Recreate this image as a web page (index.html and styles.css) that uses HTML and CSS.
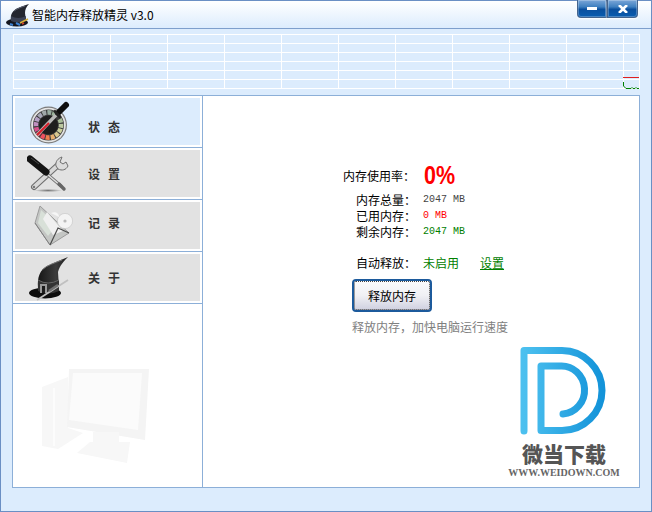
FILE: index.html
```html
<!DOCTYPE html>
<html lang="zh-CN">
<head>
  <meta charset="UTF-8" />
  <title>智能内存释放精灵 v3.0</title>
  <link rel="stylesheet" href="styles.css">
</head>
<body>
  <div class="window">
    <div class="titlebar">
      <svg class="title-icon" width="26" height="26" viewBox="0 0 26 26">
        <path d="M6 19C5 12 8 8 13 6C17 4 21 3 24 2C21 5 20 8 20 11L21 19Z" fill="#23262f"/>
        <path d="M9 9C12 7 16 5 20 4" stroke="#5a5f70" fill="none"/>
        <ellipse cx="12" cy="20.5" rx="11" ry="4" fill="#14161f"/>
        <path d="M6 14Q13 18 21 14V19Q13 22 6 19Z" fill="#3a4154"/>
        <path d="M5 22L8 23M11 21L15 23" stroke="#3b7fd0" stroke-width="2"/>
        <path d="M15 21L23 17" stroke="#d9b13b" stroke-width="1.4"/>
        <path d="M17 22L19 21" stroke="#d8432f" stroke-width="1.4"/>
      </svg>
      <span class="title-text">智能内存释放精灵 v3.0</span>
      <div class="win-buttons">
        <div class="win-btn"><span class="min-bar"></span></div>
        <div class="win-btn win-close">
          <svg width="10" height="8" viewBox="0 0 10 8"><path d="M1 0L9 8M9 0L1 8" stroke="#fff" stroke-width="2.6"/></svg>
        </div>
      </div>
    </div>

    <!-- memory history chart -->
    <svg class="chart" width="628" height="56" viewBox="0 0 628 56">
      <path d="M0.5 0V55M40.5 0V55M97.5 0V55M154.5 0V55M211.5 0V55M268.5 0V55M325.5 0V55M382.5 0V55M439.5 0V55M496.5 0V55M553.5 0V55M610.5 0V55M626.5 0V55" stroke="#fff" fill="none"/>
      <path d="M0 0.5H627M0 9.5H627M0 18.5H627M0 27.5H627M0 36.5H627M0 45.5H627M0 54.5H627" stroke="#fff" fill="none"/>
      <path d="M610 43.5H626" stroke="#e02020" fill="none"/>
      <path d="M610.5 48V52L613 54.5H618L619 53.5L620 54.5H622L623 53.5L624 54.5H626" stroke="#008000" fill="none"/>
    </svg>

    <div class="main">
      <div class="sidebar">
        <div class="nav-item nav-active">
          <svg class="nav-icon" width="46" height="46" viewBox="0 0 46 46">
            <circle cx="21.5" cy="26" r="18.5" fill="#7c7c7c"/>
            <circle cx="21.5" cy="26" r="17.3" fill="#e4e4e4"/>
            <circle cx="21.5" cy="26" r="15.5" fill="#3c3c3c"/>
            <g fill="none" stroke-width="4.6">
              <circle cx="21.5" cy="26" r="12.6" pathLength="16" stroke-dasharray="0.8 15.2" stroke="#e8304c" transform="rotate(130 21.5 26)"/>
              <circle cx="21.5" cy="26" r="12.6" pathLength="16" stroke-dasharray="0.8 15.2" stroke="#d8508c" transform="rotate(152 21.5 26)"/>
              <circle cx="21.5" cy="26" r="12.6" pathLength="16" stroke-dasharray="0.8 15.2" stroke="#c090c0" transform="rotate(175 21.5 26)"/>
              <circle cx="21.5" cy="26" r="12.6" pathLength="16" stroke-dasharray="0.8 15.2" stroke="#b4a0c4" transform="rotate(197 21.5 26)"/>
              <circle cx="21.5" cy="26" r="12.6" pathLength="16" stroke-dasharray="0.8 15.2" stroke="#a8a8b8" transform="rotate(220 21.5 26)"/>
              <circle cx="21.5" cy="26" r="12.6" pathLength="16" stroke-dasharray="0.8 15.2" stroke="#a0a8a8" transform="rotate(242 21.5 26)"/>
              <circle cx="21.5" cy="26" r="12.6" pathLength="16" stroke-dasharray="0.8 15.2" stroke="#98aca0" transform="rotate(265 21.5 26)"/>
              <circle cx="21.5" cy="26" r="12.6" pathLength="16" stroke-dasharray="0.8 15.2" stroke="#9cb49c" transform="rotate(287 21.5 26)"/>
              <circle cx="21.5" cy="26" r="12.6" pathLength="16" stroke-dasharray="0.8 15.2" stroke="#a8bc98" transform="rotate(332 21.5 26)"/>
              <circle cx="21.5" cy="26" r="12.6" pathLength="16" stroke-dasharray="0.8 15.2" stroke="#bcc8a0" transform="rotate(355 21.5 26)"/>
              <circle cx="21.5" cy="26" r="12.6" pathLength="16" stroke-dasharray="0.8 15.2" stroke="#ccd09c" transform="rotate(17 21.5 26)"/>
              <circle cx="21.5" cy="26" r="12.6" pathLength="16" stroke-dasharray="0.8 15.2" stroke="#d8c890" transform="rotate(40 21.5 26)"/>
              <circle cx="21.5" cy="26" r="12.6" pathLength="16" stroke-dasharray="0.8 15.2" stroke="#e8b070" transform="rotate(62 21.5 26)"/>
              <circle cx="21.5" cy="26" r="12.6" pathLength="16" stroke-dasharray="0.8 15.2" stroke="#f08050" transform="rotate(85 21.5 26)"/>
              <circle cx="21.5" cy="26" r="12.6" pathLength="16" stroke-dasharray="0.8 15.2" stroke="#f05060" transform="rotate(107 21.5 26)"/>
            </g>
            <circle cx="21.5" cy="26" r="9.6" fill="#1e1e1e"/>
            <path d="M10 36L30 15" stroke="#b8b8b8" stroke-width="3.4"/>
            <path d="M10 36L22 24" stroke="#d81f2c" stroke-width="2.2"/>
            <path d="M31 14L39 6" stroke="#0e0e0e" stroke-width="6" stroke-linecap="round"/>
            <path d="M27 11.5L33.5 18.5" stroke="#222" stroke-width="2.6"/>
          </svg>
          <span class="nav-label label-low">状态</span>
        </div>
        <div class="nav-item">
          <svg class="nav-icon" width="46" height="46" viewBox="0 0 46 46">
            <defs>
              <radialGradient id="toolShadow">
                <stop offset="0" stop-color="#777"/>
                <stop offset="1" stop-color="#e2e2e2"/>
              </radialGradient>
            </defs>
            <ellipse cx="21" cy="39.5" rx="14" ry="1.6" fill="url(#toolShadow)"/>
            <path d="M7 36L30 15" stroke="#6e6e6e" stroke-width="6" stroke-linecap="round"/>
            <path d="M7 36L30 15" stroke="#d8d8d8" stroke-width="3.8" stroke-linecap="round"/>
            <circle cx="7" cy="36" r="1.2" fill="#777"/>
            <path d="M35 6C31 7 28 11 29 15L31 18C35 20 39 19 41 15L39 11L36 13L33 11Z" fill="#dcdcdc" stroke="#6e6e6e"/>
            <path d="M20 23L34 35" stroke="#6e6e6e" stroke-width="3" stroke-linecap="round"/>
            <path d="M20 23L34 35" stroke="#dedede" stroke-width="1.6" stroke-linecap="round"/>
            <path d="M32 33L37 38" stroke="#666" stroke-width="3.4" stroke-linecap="round"/>
            <path d="M3 8L19 21" stroke="#141414" stroke-width="7" stroke-linecap="round"/>
            <path d="M4 7L12 13" stroke="#4a4a4a" stroke-width="1"/>
          </svg>
          <span class="nav-label">设置</span>
        </div>
        <div class="nav-item">
          <svg class="nav-icon" width="46" height="46" viewBox="0 0 46 46">
            <path d="M13 3L8 20L23 42L42 30Z" fill="#c4c6c4" stroke="#9c9c9c"/>
            <path d="M14 7L11 20L21 33L30 22Z" fill="#d8e0d8"/>
            <path d="M20 9L36 28L26 32L16 16Z" fill="#f0f0f0"/>
            <circle cx="38" cy="18" r="7.6" fill="#f4f4f4" stroke="#c4c4c4" stroke-width="0.6"/>
            <circle cx="38" cy="18" r="1.6" fill="#bbb"/>
            <path d="M24 10C28 8 32 10 32 14" fill="#f6f6f6"/>
            <path d="M23 42L31 25L42 30" fill="none" stroke="#4c4c4c" stroke-width="1.2"/>
            <path d="M8 20L23 42" fill="none" stroke="#808080"/>
          </svg>
          <span class="nav-label label-high">记录</span>
        </div>
        <div class="nav-item">
          <svg class="nav-icon" width="46" height="46" viewBox="0 0 46 46">
            <defs>
              <linearGradient id="hatCrown" x1="0" x2="1" y1="0" y2="0">
                <stop offset="0" stop-color="#161616"/>
                <stop offset="0.6" stop-color="#3c3c3c"/>
                <stop offset="1" stop-color="#1c1c1c"/>
              </linearGradient>
            </defs>
            <path d="M11 33C10 22 13 15 20 11C26 8 34 5 41 2C37 6 33 10 31 17L32 33Z" fill="url(#hatCrown)"/>
            <path d="M15 15C20 10 28 8 35 5" stroke="#777" fill="none"/>
            <ellipse cx="18" cy="38" rx="16" ry="5.4" fill="#0e0e0e"/>
            <path d="M11 25Q21 31 32 25V36Q21 41 11 36Z" fill="#333"/>
            <path d="M11 25Q21 31 32 25" stroke="#666" fill="none"/>
            <rect x="13" y="29" width="7" height="9" fill="#9a9a9a"/>
            <rect x="15" y="31" width="3" height="7" fill="#1c1c1c"/>
            <path d="M10 45L41 25" stroke="#c0c0c0" stroke-width="1.8"/>
            <path d="M22 36L31 30" stroke="#707070" stroke-width="2.6"/>
          </svg>
          <span class="nav-label">关于</span>
        </div>

        <!-- faded computer in the empty part of the menu -->
        <svg class="computer" width="110" height="100" viewBox="0 0 110 100">
          <path d="M1 19L27 9V60L42 65L17 81L1 78Z" fill="#f7f7f7"/>
          <path d="M13 20V78" stroke="#fcfcfc" stroke-width="2"/>
          <path d="M28 1H108L104 72L26 59Z" fill="#f4f4f4"/>
          <path d="M32 5H101L97 62L28 52Z" fill="#fbfbfb"/>
          <path d="M52 64H78V74H89L86 95L36 85L49 74H52Z" fill="#f7f7f7"/>
        </svg>
      </div>

      <div class="content">
        <div class="stats">
          <div class="usage-row">
            <span class="usage-label">内存使用率：</span>
            <span class="usage-value">0%</span>
          </div>
          <div class="stat-row"><span class="stat-label">内存总量：</span><span class="num">2047 MB</span></div>
          <div class="stat-row"><span class="stat-label">已用内存：</span><span class="num red">0 MB</span></div>
          <div class="stat-row"><span class="stat-label">剩余内存：</span><span class="num green">2047 MB</span></div>
          <div class="stat-row auto-row">
            <span class="stat-label">自动释放：</span>
            <span class="green auto-state">未启用</span>
            <a class="green auto-link">设置</a>
          </div>
          <button class="release-btn">释放内存</button>
          <div class="hint">释放内存，加快电脑运行速度</div>
        </div>

        <!-- site watermark -->
        <div class="watermark">
          <svg width="88" height="88" viewBox="0 0 88 88">
            <defs>
              <linearGradient id="logoBlue" x1="0" x2="1" y1="0" y2="0">
                <stop offset="0" stop-color="#4cc0ef"/>
                <stop offset="1" stop-color="#1393d9"/>
              </linearGradient>
            </defs>
            <path d="M4 84V3.5H42A40 40 0 0 1 42 83.5H21V19H40A23 24 0 0 1 43 67" fill="none" stroke="url(#logoBlue)" stroke-width="7" stroke-linecap="round" stroke-linejoin="round"/>
          </svg>
          <div class="wm-title">微当下载</div>
          <div class="wm-url">WWW.WEIDOWN.COM</div>
        </div>
      </div>
    </div>
  </div>
</body>
</html>
```

FILE: styles.css
```css
:root {
  --border: #6a8fc4;
  --panel-line: #8cafd8;
  --bg: #dcecfd;
  --green: #008000;
}
* {
  box-sizing: border-box;
  margin: 0;
  padding: 0;
}
body {
  width: 652px;
  height: 512px;
  overflow: hidden;
  font-family: "Noto Sans CJK SC", "Liberation Sans", sans-serif;
  font-size: 12px;
  color: #000;
}
.window {
  width: 652px;
  height: 512px;
  border: 1px solid var(--border);
  background: var(--bg);
  display: flex;
  flex-direction: column;
}
.titlebar {
  height: 28px;
  flex: none;
  border-bottom: 1px solid #7e9fcc;
  background: linear-gradient(to bottom, #ffffff, #dcecfd);
  display: flex;
  align-items: flex-start;
  padding-left: 4px;
}
.title-icon {
  margin-top: 1px;
  flex: none;
}
.title-text {
  font-size: 12px;
  line-height: 28px;
  margin-left: 1px;
}
.win-buttons {
  margin-left: auto;
  margin-right: 13px;
  margin-top: -1px;
  display: flex;
}
.win-btn {
  width: 30px;
  height: 18px;
  background: linear-gradient(to bottom, #7ba6d8 0%, #3f80c0 40%, #0a4f9e 55%, #0a5db0 100%);
  border: 1px solid #44648e;
  border-top: none;
  display: flex;
  align-items: center;
  justify-content: center;
  box-shadow: inset 0 0 0 1px rgba(255, 255, 255, 0.25), 0 1px 2px #fff;
}
.win-btn:first-child {
  border-radius: 0 0 0 4px;
}
.win-close {
  width: 31px;
  border-radius: 0 0 4px 0;
}
.min-bar {
  width: 10px;
  height: 3px;
  background: #fff;
}
.chart {
  display: block;
  flex: none;
  margin: 5px 0 0 12px;
}
.main {
  width: 628px;
  height: 393px;
  margin: 5px 0 0 11px;
  display: flex;
  border: 1px solid var(--panel-line);
  background: #fff;
}
.sidebar {
  width: 190px;
  flex: none;
  border-right: 1px solid var(--panel-line);
  position: relative;
  display: flex;
  flex-direction: column;
}
.nav-item {
  height: 52px;
  border-bottom: 1px solid var(--panel-line);
  background: #e2e2e2;
  box-shadow: inset 0 0 0 2px #fff;
  display: flex;
  align-items: center;
  padding-left: 14px;
}
.nav-active {
  background: #dcecfd;
}
.nav-icon {
  flex: none;
}
.nav-label {
  margin-left: 15px;
  font-size: 12px;
  font-weight: 700;
  letter-spacing: 8px;
  color: #333;
}
.label-low {
  margin-top: 10px;
}
.label-high {
  margin-bottom: 6px;
}
.computer {
  position: absolute;
  left: 28px;
  bottom: 19px;
}
.content {
  flex: 1;
  position: relative;
}
.stats {
  padding: 64px 0 0 140px;
}
.usage-row {
  display: flex;
  align-items: center;
  height: 31px;
}
.usage-label {
  width: 81px;
}
.usage-value {
  display: inline-block;
  font-family: "Liberation Sans", sans-serif;
  font-size: 25px;
  font-weight: 700;
  color: #f00;
  transform: scaleX(0.86);
  transform-origin: left center;
}
.stat-row {
  display: flex;
  align-items: center;
  height: 16px;
  padding-left: 13px;
}
.stat-label {
  width: 67px;
}
.num {
  font-family: "Liberation Mono", monospace;
  font-size: 10px;
  color: #444;
}
.red {
  color: #f00;
}
.green {
  color: var(--green);
}
.auto-row {
  margin-top: 14px;
  height: 18px;
}
.auto-state {
  width: 57px;
}
.auto-link {
  text-decoration: underline;
}
.release-btn {
  display: block;
  width: 80px;
  height: 33px;
  margin: 8px 0 0 9px;
  font-family: inherit;
  font-size: 12px;
  color: #000;
  border: 2px solid #1c5a9c;
  border-radius: 4px;
  outline: 1px dotted #444;
  outline-offset: -3px;
  background: linear-gradient(to bottom, #fbfbfd, #f0f0f4 50%, #cfd0e0);
}
.hint {
  margin: 6px 0 0 9px;
  color: #808080;
}
.watermark {
  position: absolute;
  right: 19px;
  bottom: 7px;
  width: 112px;
  display: flex;
  flex-direction: column;
  align-items: center;
}
.watermark svg {
  display: block;
}
.wm-title {
  font-size: 21px;
  line-height: 24px;
  font-weight: 900;
  color: #555;
  margin-top: 6px;
}
.wm-url {
  font-family: "Liberation Serif", serif;
  font-size: 10px;
  line-height: 14px;
  font-weight: 700;
  color: #666;
  white-space: nowrap;
  margin-top: 1px;
}
```
